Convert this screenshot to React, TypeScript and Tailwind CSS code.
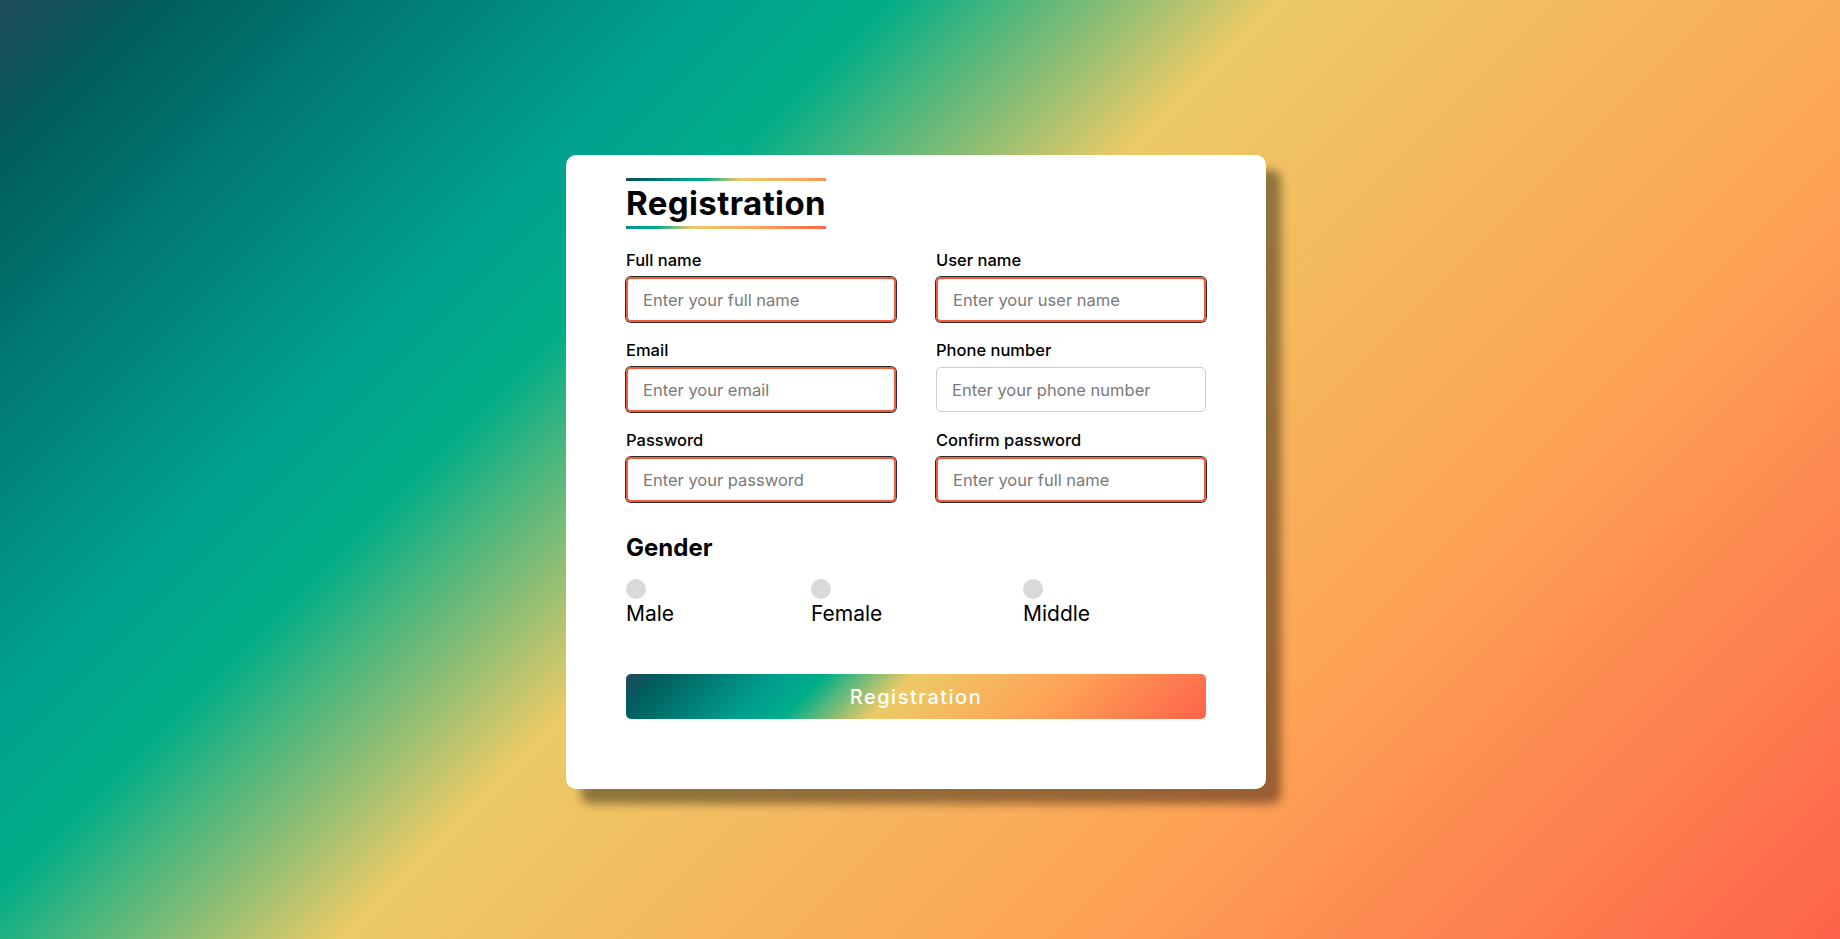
import React from "react";

type Field = { label: string; placeholder: string; invalid: boolean };

const fields: Field[] = [
  { label: "Full name", placeholder: "Enter your full name", invalid: true },
  { label: "User name", placeholder: "Enter your user name", invalid: true },
  { label: "Email", placeholder: "Enter your email", invalid: true },
  { label: "Phone number", placeholder: "Enter your phone number", invalid: false },
  { label: "Password", placeholder: "Enter your password", invalid: true },
  { label: "Confirm password", placeholder: "Enter your full name", invalid: true },
];

const genders = [
  { label: "Male", w: "w-[48px]" },
  { label: "Female", w: "w-[75px]" },
  { label: "Middle", w: "w-[67px]" },
];

export default function App() {
  return (
    <div className="flex h-screen w-full items-center justify-center pt-[5px] pr-[8px] bg-[linear-gradient(135deg,#1f4a5a_0%,#005e5e_6%,#00a08e_25%,#00ad88_32%,#ecca66_46%,#fea356_72%,#fd634a_100%)] font-['Inter','Liberation_Sans',sans-serif]">
      <div className="w-[700px] rounded-[10px] bg-white px-[60px] pt-[23px] pb-[70px] text-black shadow-[15px_15px_10px_rgba(0,0,0,0.4)]">
        <div className="inline-block py-[3px] bg-[linear-gradient(135deg,#1f4a5a_0%,#005e5e_6%,#00a08e_25%,#00ad88_32%,#ecca66_46%,#fea356_72%,#fd634a_100%)]">
          <div className="h-[45px] bg-white text-[33px] font-bold leading-[45px] tracking-[0.4px]">
            Registration
          </div>
        </div>

        <div className="mt-[19px] grid grid-cols-2 gap-x-[40px] gap-y-[16px]">
          {fields.map((f) => (
            <div key={f.label}>
              <div className="mb-[5px] text-[16.5px] font-medium leading-[24px]">{f.label}</div>
              {f.invalid ? (
                <input
                  type="text"
                  placeholder={f.placeholder}
                  className="block h-[45px] w-full rounded-[5px] border-2 border-[#f5593b] pl-[15px] text-[16.5px] outline-none ring-1 ring-[#2b2b2b] placeholder:text-[#7a7a7a]"
                />
              ) : (
                <input
                  type="text"
                  placeholder={f.placeholder}
                  className="block h-[45px] w-full rounded-[5px] border border-[#cccccc] pl-[15px] text-[16.5px] outline-none placeholder:text-[#7a7a7a]"
                />
              )}
            </div>
          ))}
        </div>

        <div className="mt-[32px] text-[24px] font-bold leading-[28px]">Gender</div>
        <div className="mt-[17px] flex w-[80%] justify-between">
          {genders.map((g) => (
            <div key={g.label} className={`flex flex-col items-start ${g.w}`}>
              <span className="block h-[20px] w-[20px] rounded-full bg-[#d9d9d9]" />
              <span className="mt-[1px] whitespace-nowrap text-[21px] leading-[28px]">{g.label}</span>
            </div>
          ))}
        </div>

        <button
          type="button"
          className="mt-[46px] block h-[45px] w-full rounded-[5px] bg-[linear-gradient(135deg,#1f4a5a_0%,#005e5e_6%,#00a08e_25%,#00ad88_32%,#ecca66_46%,#fea356_72%,#fd634a_100%)] text-[20px] font-medium tracking-[1.5px] text-white"
        >
          Registration
        </button>
      </div>
    </div>
  );
}
